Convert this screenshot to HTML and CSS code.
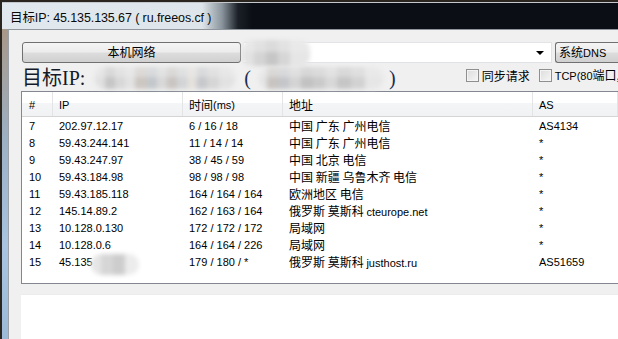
FILE: index.html
```html
<!DOCTYPE html>
<html lang="zh">
<head>
<meta charset="utf-8">
<title>目标IP</title>
<link rel="stylesheet" href="styles.css">
</head>
<body>
<div class="window">
  <div class="titlebar"><span class="title">目标IP: 45.135.135.67 ( ru.freeos.cf )</span></div>
  <div class="frame">
    <div class="frame-left"></div>
    <div class="client">
      <div class="toolbar">
        <button class="btn">本机网络</button>
        <div class="combo">
          <div class="blur blur-a"></div>
          <span class="arrow"></span>
        </div>
        <div class="dns">系统<span class="lat">DNS</span></div>
      </div>
      <div class="target">
        <span class="big">目标IP:</span>
        <div class="blur blur-b"></div>
        <span class="big paren">(</span>
        <div class="blur blur-c"></div>
        <span class="big paren">)</span>
        <div class="checks">
          <label class="chk"><span class="box"></span><span>同步请求</span></label>
          <label class="chk"><span class="box"></span><span><span class="lat">TCP(80</span>端口,</span></label>
        </div>
      </div>
      <div class="list">
        <div class="row head">
          <div class="c c-n">#</div>
          <div class="c">IP</div>
          <div class="c"><span class="zh">时间</span>(ms)</div>
          <div class="c zh">地址</div>
          <div class="c">AS</div>
        </div>
        <div class="row"><div class="c c-n">7</div><div class="c">202.97.12.17</div><div class="c">6 / 16 / 18</div><div class="c zh">中国 广东 广州电信</div><div class="c">AS4134</div></div>
        <div class="row"><div class="c c-n">8</div><div class="c">59.43.244.141</div><div class="c">11 / 14 / 14</div><div class="c zh">中国 广东 广州电信</div><div class="c">*</div></div>
        <div class="row"><div class="c c-n">9</div><div class="c">59.43.247.97</div><div class="c">38 / 45 / 59</div><div class="c zh">中国 北京 电信</div><div class="c">*</div></div>
        <div class="row"><div class="c c-n">10</div><div class="c">59.43.184.98</div><div class="c">98 / 98 / 98</div><div class="c zh">中国 新疆 乌鲁木齐 电信</div><div class="c">*</div></div>
        <div class="row"><div class="c c-n">11</div><div class="c">59.43.185.118</div><div class="c">164 / 164 / 164</div><div class="c zh">欧洲地区 电信</div><div class="c">*</div></div>
        <div class="row"><div class="c c-n">12</div><div class="c">145.14.89.2</div><div class="c">162 / 163 / 164</div><div class="c zh">俄罗斯 莫斯科 <span class="lat">cteurope.net</span></div><div class="c">*</div></div>
        <div class="row"><div class="c c-n">13</div><div class="c">10.128.0.130</div><div class="c">172 / 172 / 172</div><div class="c zh">局域网</div><div class="c">*</div></div>
        <div class="row"><div class="c c-n">14</div><div class="c">10.128.0.6</div><div class="c">164 / 164 / 226</div><div class="c zh">局域网</div><div class="c">*</div></div>
        <div class="row"><div class="c c-n">15</div><div class="c ipcell">45.135<div class="blur blur-d"></div></div><div class="c">179 / 180 / *</div><div class="c zh">俄罗斯 莫斯科 <span class="lat">justhost.ru</span></div><div class="c">AS51659</div></div>
      </div>
      <div class="panel"></div>
    </div>
  </div>
</div>
</body>
</html>
```

FILE: styles.css
```css
* { box-sizing: border-box; }
html, body {
  margin: 0;
  width: 618px;
  height: 339px;
  overflow: hidden;
  background: #2b2520;
  font-family: "Liberation Sans", "Noto Sans CJK SC", sans-serif;
}
.window {
  display: flex;
  flex-direction: column;
  width: 618px;
  height: 339px;
  padding-left: 2px;
}
.titlebar {
  margin-top: 2px;
  height: 27px;
  border-top: 1px solid #c4c8cc;
  background: linear-gradient(90deg, #e2e9ee 0, #dfe6eb 200px, #8a949c 220px, #1b2028 236px, #0b0f15 250px);
  display: flex;
  align-items: center;
  padding-left: 8px;
  flex-shrink: 0;
}
.title {
  font-size: 12.5px;
  color: #0a0a0a;
  letter-spacing: -0.1px;
}
.frame {
  flex: 1;
  display: flex;
  min-height: 0;
}
.frame-left {
  width: 6px;
  flex-shrink: 0;
  background: linear-gradient(180deg, #a89888 0, #9cb0c4 35%, #a8c4e0 70%, #9cbad8 100%);
}
.client {
  flex: 1;
  background: #f0f0f0;
  border-top: 1px solid #8e959c;
  border-left: 1px solid #9aa0a6;
  padding: 11px 0 0 12px;
  display: flex;
  flex-direction: column;
  min-width: 0;
  overflow: hidden;
}
.toolbar {
  display: flex;
  align-items: center;
  height: 22px;
  padding-left: 1px;
}
.btn {
  width: 219px;
  height: 21px;
  margin: 0;
  padding: 0;
  border: 1px solid #707070;
  border-radius: 3px;
  background: linear-gradient(180deg, #f4f4f4 0, #ececec 48%, #dddddd 52%, #d0d0d0 100%);
  font-family: "Noto Sans CJK SC", sans-serif;
  font-size: 12px;
  color: #000;
  line-height: 18px;
}
.combo {
  position: relative;
  margin-left: 3px;
  width: 308px;
  height: 21px;
  background: #fff;
  border: 1px solid #e2e3e6;
  border-left: none;
}
.arrow {
  position: absolute;
  right: 7px;
  top: 8px;
  width: 0;
  height: 0;
  border-left: 4px solid transparent;
  border-right: 4px solid transparent;
  border-top: 4px solid #000;
}
.dns {
  margin-left: 3px;
  flex: 1;
  height: 21px;
  border: 1px solid #707070;
  border-right: none;
  border-radius: 3px 0 0 3px;
  background: linear-gradient(180deg, #f4f4f4 0, #ececec 48%, #dddddd 52%, #d0d0d0 100%);
  font-family: "Noto Sans CJK SC", sans-serif;
  font-size: 12px;
  line-height: 18px;
  padding-left: 3px;
  white-space: nowrap;
}
.lat {
  font-family: "Liberation Sans", sans-serif;
  font-size: 11px;
}
.blur {
  filter: blur(2px);
  border-radius: 9px;
  flex-shrink: 0;
}
.blur-a {
  position: absolute;
  left: -2px;
  top: -3px;
  width: 68px;
  height: 26px;
  background:
    linear-gradient(180deg, rgba(236,236,236,0.55) 0 45%, transparent 45%),
    linear-gradient(90deg, #e2e2e2 0 12px, #d4d4d4 12px 24px, #c6c6c6 24px 36px, #d6d6d6 36px 48px, #e6e6e6 48px 68px);
}
.target {
  display: flex;
  align-items: center;
  height: 28px;
  padding-left: 1px;
  padding-top: 1px;
  white-space: nowrap;
}
.big {
  font-family: "Liberation Serif", "Noto Sans CJK SC", serif;
  font-size: 20px;
  line-height: 26px;
  color: #141a2a;
  white-space: nowrap;
  flex-shrink: 0;
}
.paren { color: #1c2c50; }
.blur-b {
  margin-left: 10px;
  margin-right: 9px;
  width: 140px;
  height: 22px;
  background:
    linear-gradient(180deg, rgba(236,236,236,0.5) 0 45%, transparent 45%),
    linear-gradient(90deg, #e0e0e0 0 10px, #c6c6c6 10px 20px, #d8d8d8 20px 30px, #e2e2e2 30px 40px, #cdc7c2 40px 52px, #c3c8cc 52px 62px, #d8d8d8 62px 72px, #c9c5c2 72px 82px, #d2d4d6 82px 92px, #e4e0dc 92px 102px, #c6c8cc 102px 112px, #d6d6d6 112px 124px, #e2e2e2 124px 140px);
}
.blur-c {
  margin-left: 8px;
  margin-right: 6px;
  width: 124px;
  height: 22px;
  background:
    linear-gradient(180deg, rgba(236,236,236,0.5) 0 45%, transparent 45%),
    linear-gradient(90deg, #e4e4e4 0 8px, #c8c4c2 8px 20px, #c4c6ca 20px 30px, #d4d4d4 30px 42px, #c2c2c2 42px 54px, #cacaca 54px 66px, #d8d8d8 66px 78px, #c6c6c6 78px 92px, #d2d2d2 92px 106px, #e6e6e6 106px 124px);
}
.checks {
  display: flex;
  align-self: flex-start;
  margin-top: 3px;
  margin-left: 70px;
  gap: 9px;
  white-space: nowrap;
  flex-shrink: 0;
}
.chk {
  display: flex;
  align-items: center;
  gap: 3px;
  font-family: "Noto Sans CJK SC", sans-serif;
  font-size: 12px;
  color: #000;
  line-height: 16px;
}
.box {
  width: 13px;
  height: 13px;
  border: 1px solid #8f8f8f;
  background: linear-gradient(135deg, #dcdcdc, #f6f6f6);
  box-shadow: inset 0 0 0 1px #f4f4f4;
}
.list {
  margin-top: 0;
  height: 193px;
  border: 1px solid #828790;
  border-right: none;
  background: #fff;
  flex-shrink: 0;
}
.row {
  display: grid;
  grid-template-columns: 31px 130px 100px 250px 1fr;
  height: 17px;
  align-items: center;
  font-size: 11px;
  color: #000;
  white-space: nowrap;
}
.row.head {
  height: 25px;
  background: linear-gradient(180deg, #ffffff 0, #ffffff 45%, #f4f5f6 46%, #f1f2f4 100%);
  border-bottom: 1px solid #d5d5d5;
  align-items: stretch;
}
.row.head .c {
  border-right: 1px solid #e3e4e6;
  display: flex;
  align-items: center;
  padding-top: 1px;
}
.c {
  padding-left: 6px;
  overflow: hidden;
}
.c-n { padding-left: 7px; }
.zh {
  font-family: "Noto Sans CJK SC", sans-serif;
  font-size: 12px;
}
.ipcell {
  position: relative;
  overflow: visible;
}
.blur-d {
  position: absolute;
  left: 38px;
  top: -2px;
  width: 48px;
  height: 21px;
  background: linear-gradient(90deg, #e6e6e6 0 10px, #d6d6d6 10px 22px, #cdcdcd 22px 34px, #ececec 34px 48px);
  border-radius: 10px;
}
.panel {
  margin-top: 10px;
  margin-left: 0;
  flex: 1;
  background: #fff;
  border-top: 1px solid #ececec;
}
```
